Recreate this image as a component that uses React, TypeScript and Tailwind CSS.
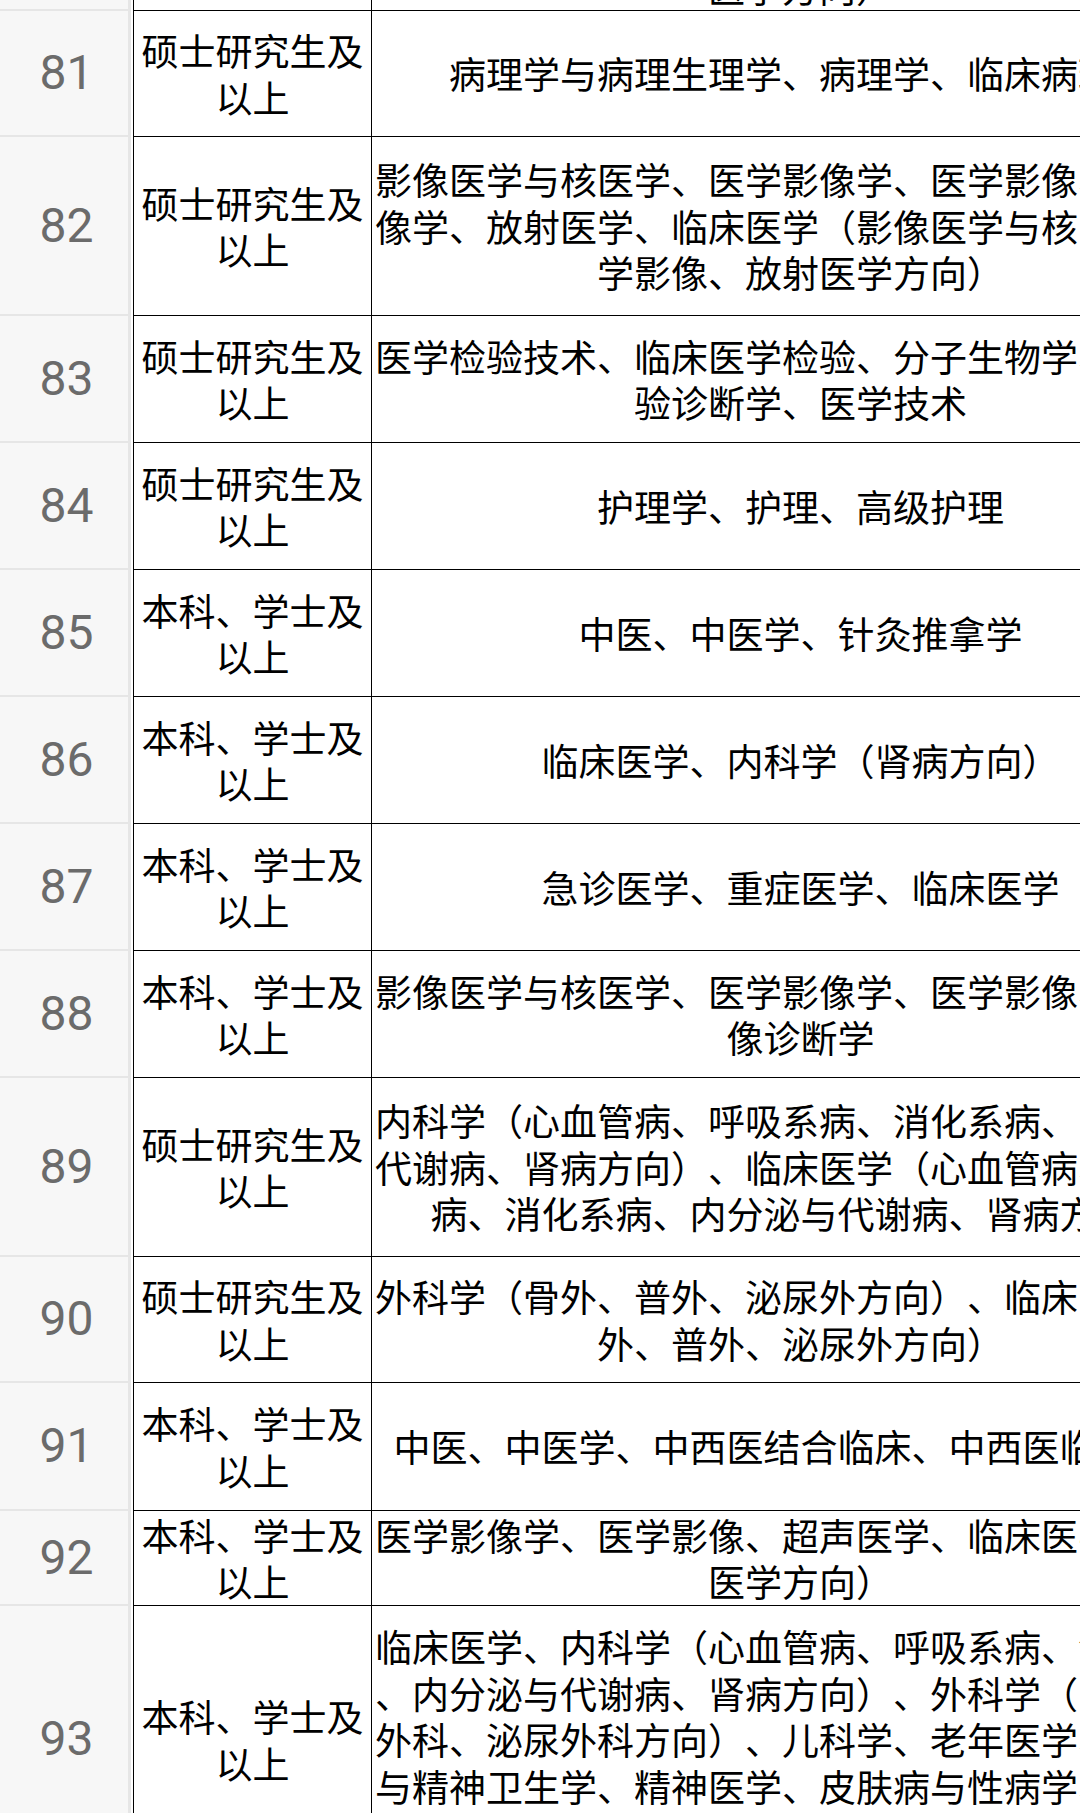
type Row = {
  n: number
  edu: string[]
  lines: string[]
  h: string
  partial?: boolean
}

const MASTER = ['硕士研究生及', '以上']
const BACHELOR = ['本科、学士及', '以上']

const rows: Row[] = [
  { n: 80, edu: [], lines: ['医学方向）'], h: 'h-[11px]', partial: true },
  { n: 81, edu: MASTER, lines: ['病理学与病理生理学、病理学、临床病理学'], h: 'h-[126px]' },
  {
    n: 82,
    edu: MASTER,
    lines: [
      '影像医学与核医学、医学影像学、医学影像、医学影',
      '像学、放射医学、临床医学（影像医学与核医学、医',
      '学影像、放射医学方向）',
    ],
    h: 'h-[179px]',
  },
  {
    n: 83,
    edu: MASTER,
    lines: ['医学检验技术、临床医学检验、分子生物学、临床检', '验诊断学、医学技术'],
    h: 'h-[127px]',
  },
  { n: 84, edu: MASTER, lines: ['护理学、护理、高级护理'], h: 'h-[127px]' },
  { n: 85, edu: BACHELOR, lines: ['中医、中医学、针灸推拿学'], h: 'h-[127px]' },
  { n: 86, edu: BACHELOR, lines: ['临床医学、内科学（肾病方向）'], h: 'h-[127px]' },
  { n: 87, edu: BACHELOR, lines: ['急诊医学、重症医学、临床医学'], h: 'h-[127px]' },
  {
    n: 88,
    edu: BACHELOR,
    lines: ['影像医学与核医学、医学影像学、医学影像、医学影', '像诊断学'],
    h: 'h-[127px]',
  },
  {
    n: 89,
    edu: MASTER,
    lines: [
      '内科学（心血管病、呼吸系病、消化系病、内分泌与',
      '代谢病、肾病方向）、临床医学（心血管病、呼吸系',
      '病、消化系病、内分泌与代谢病、肾病方向）',
    ],
    h: 'h-[179px]',
  },
  {
    n: 90,
    edu: MASTER,
    lines: ['外科学（骨外、普外、泌尿外方向）、临床医学（骨', '外、普外、泌尿外方向）'],
    h: 'h-[126px]',
  },
  { n: 91, edu: BACHELOR, lines: ['中医、中医学、中西医结合临床、中西医临床医学'], h: 'h-[128px]' },
  {
    n: 92,
    edu: BACHELOR,
    lines: ['医学影像学、医学影像、超声医学、临床医学（超声', '医学方向）'],
    h: 'h-[95px]',
  },
  {
    n: 93,
    edu: BACHELOR,
    lines: [
      '临床医学、内科学（心血管病、呼吸系病、消化系病',
      '、内分泌与代谢病、肾病方向）、外科学（骨科、普',
      '外科、泌尿外科方向）、儿科学、老年医学、精神病',
      '与精神卫生学、精神医学、皮肤病与性病学、全科医',
      '学',
    ],
    h: 'h-[268px]',
  },
]

function TableRow({ row }: { row: Row }) {
  return (
    <div className={`flex ${row.h}`}>
      {/* frozen row header */}
      <div className="w-[131px] shrink-0 flex items-center justify-center pl-[5px] bg-[#f7f7f7] border-r-[3px] border-b-2 border-[#e6e6e6] font-['Roboto',sans-serif] text-[48px] leading-none text-[#6b6b6b]">
        {!row.partial && row.n}
      </div>
      <div className="w-[2px] shrink-0" />

      <div className="w-[238px] shrink-0 flex flex-col items-center justify-center border-l border-b border-black">
        {row.edu.map((t) => (
          <div key={t} className="whitespace-nowrap">
            {t}
          </div>
        ))}
      </div>

      <div
        className={`w-[858px] shrink-0 flex flex-col items-center border-l border-b border-black overflow-hidden ${
          row.partial ? 'justify-end' : 'justify-center'
        }`}
      >
        {row.lines.map((t, i) => (
          <div key={i} className="whitespace-nowrap">
            {t}
          </div>
        ))}
      </div>
    </div>
  )
}

export default function App() {
  return (
    <div className="w-[1080px] h-[1813px] overflow-hidden bg-white">
      <div className="w-[1229px] font-['Noto_Sans_CJK_SC',sans-serif] text-[37px] leading-[46.5px] text-black [text-spacing-trim:space-all]">
        {rows.map((r) => (
          <TableRow key={r.n} row={r} />
        ))}
      </div>
    </div>
  )
}
